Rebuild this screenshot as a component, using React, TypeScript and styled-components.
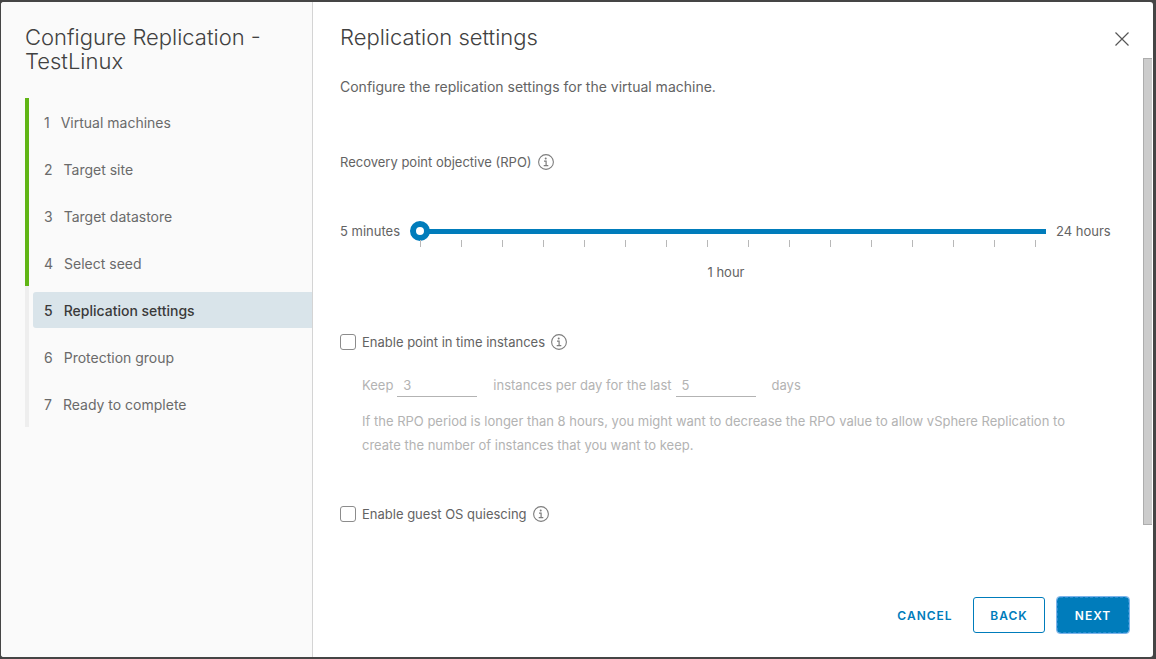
import React, { useState } from "react";
import styled, { createGlobalStyle, css } from "styled-components";

const GlobalStyle = createGlobalStyle`
  * { box-sizing: border-box; }
  body {
    margin: 0;
    background: #454545;
    color: #636363;
    font-family: Inter, "Liberation Sans", sans-serif;
    font-size: 13px;
    line-height: 24px;
  }
  button, input { font-family: inherit; }
`;

const Backdrop = styled.div`
  min-height: 100vh;
  display: flex;
  padding: 2px 3px 2px 1px;
  background: #454545;
`;

const Wizard = styled.div`
  flex: 1;
  display: flex;
  min-width: 0;
  border-radius: 3px;
  overflow: hidden;
  background: #ffffff;
`;

const Sidebar = styled.aside`
  flex: 0 0 312px;
  padding: 23px 0 24px 24px;
  background: #fafafa;
  border-right: 1px solid #d4d4d4;
`;

const SidebarTitle = styled.h1`
  margin: 0 24px 25px 0;
  font-size: 22px;
  font-weight: 300;
  line-height: 24px;
  color: #414141;
`;

const StepList = styled.ol`
  margin: 0;
  padding: 0;
  list-style: none;
`;

const StepItem = styled.li<{ $done: boolean }>`
  padding: 6px 0 5px 4px;
  border-left: 4px solid ${(p) => (p.$done ? "#60b515" : "#eeeeee")};
`;

const StepButton = styled.button<{ $active: boolean }>`
  display: flex;
  align-items: center;
  gap: 11px;
  width: 100%;
  height: 36px;
  padding: 0 11px;
  border: 0;
  border-radius: 3px 0 0 3px;
  background: ${(p) => (p.$active ? "#d9e4ea" : "transparent")};
  color: ${(p) => (p.$active ? "#3a3a3a" : "#6a6a6a")};
  font-size: 14px;
  font-weight: ${(p) => (p.$active ? 500 : 400)};
  text-align: left;
  cursor: pointer;
`;

const Main = styled.main`
  flex: 1;
  min-width: 0;
  display: flex;
  flex-direction: column;
`;

const Header = styled.header`
  display: flex;
  align-items: flex-start;
  justify-content: space-between;
  height: 56px;
  padding: 23px 23px 0 27px;
`;

const PageTitle = styled.h2`
  margin: 0;
  font-size: 22px;
  font-weight: 300;
  color: #414141;
`;

const CloseButton = styled.button`
  display: flex;
  padding: 6px 0;
  border: 0;
  background: none;
  color: #565656;
  cursor: pointer;
`;

const Body = styled.div`
  flex: 1;
  display: flex;
`;

const Content = styled.div`
  flex: 1;
  min-width: 0;
  padding: 17px 33px 0 27px;
`;

const ScrollTrack = styled.div`
  flex: 0 0 10px;
  padding-right: 1px;
`;

const ScrollThumb = styled.div`
  height: 90%;
  background: #cccccc;
  border: 1px solid #adadad;
  border-right: 0;
`;

const Intro = styled.p`
  margin: 0 0 51px;
  font-size: 14px;
`;

const FieldTitle = styled.div`
  display: flex;
  align-items: center;
  gap: 6px;
  margin-bottom: 47px;
`;

const SliderRow = styled.div`
  display: grid;
  grid-template-columns: 60px 1fr 54px;
  column-gap: 10px;
  margin-bottom: 46px;
  line-height: 20px;
  white-space: nowrap;
`;

const thumbStyle = css`
  width: 20px;
  height: 20px;
  border: 6px solid #007cbb;
  border-radius: 50%;
  background: #ffffff;
  box-sizing: border-box;
`;

const Slider = styled.input`
  display: block;
  appearance: none;
  width: 100%;
  height: 20px;
  margin: 0 0 -1px;
  background: linear-gradient(#007cbb, #007cbb) right 0 top 8px / calc(100% - 10px) 5px no-repeat;
  border-radius: 2px;
  cursor: pointer;
  &::-webkit-slider-thumb { appearance: none; ${thumbStyle} }
  &::-moz-range-thumb { ${thumbStyle} }
`;

const Ticks = styled.div`
  display: flex;
  justify-content: space-between;
  padding: 0 10px;
`;

const Tick = styled.span`
  width: 1px;
  height: 7px;
  background: #b8b8b8;
`;

const Scale = styled.div`
  display: grid;
  grid-template-columns: repeat(15, 1fr);
  padding: 13px 10px 0;
  line-height: 24px;
`;

const ScaleValue = styled.output`
  grid-column: 8;
  width: 0;
`;

const CheckRow = styled.div`
  display: flex;
  align-items: center;
  gap: 6px;
`;

const CheckLabel = styled.label`
  display: flex;
  align-items: center;
  gap: 6px;
  cursor: pointer;
`;

const Checkbox = styled.input`
  appearance: none;
  width: 16px;
  height: 16px;
  margin: 0;
  border: 1px solid #8c8c8c;
  border-radius: 3px;
  background: #ffffff;
  &:checked { background: #007cbb; border-color: #007cbb; }
`;

const Retention = styled.div<{ $enabled: boolean }>`
  padding: 19px 0 45px 22px;
  color: ${(p) => (p.$enabled ? "#636363" : "#b3b3b3")};
`;

const KeepRow = styled.div`
  display: flex;
  align-items: center;
  margin-bottom: 12px;
`;

const NumberInput = styled.input`
  width: 80px;
  height: 24px;
  margin: 0 16px 0 4px;
  padding: 0 6px;
  border: 0;
  border-bottom: 1px solid #b3b3b3;
  background: transparent;
  color: inherit;
  font-size: 13px;
`;

const Hint = styled.p`
  margin: 0;
  max-width: 740px;
`;

const Footer = styled.footer`
  display: flex;
  justify-content: flex-end;
  gap: 12px;
  padding: 20px 24px 24px;
`;

const Button = styled.button<{ $kind: "link" | "outline" | "primary" }>`
  height: 36px;
  min-width: 72px;
  padding: 0 7px;
  border: 1px solid ${(p) => (p.$kind === "link" ? "transparent" : "#007cbb")};
  border-radius: 3px;
  background: ${(p) => (p.$kind === "primary" ? "#007cbb" : "transparent")};
  color: ${(p) => (p.$kind === "primary" ? "#ffffff" : "#007cbb")};
  font-size: 12px;
  font-weight: 600;
  letter-spacing: 1px;
  text-transform: uppercase;
  cursor: pointer;
  ${(p) =>
    p.$kind === "primary" &&
    css`
      border: 1px dashed #2b8fd0;
      outline: 1px solid #7db4ea;
    `}
`;

const InfoIcon = () => (
  <svg width="16" height="16" viewBox="0 0 16 16" fill="none" stroke="#7d7d7d" role="img" aria-label="More information">
    <circle cx="8" cy="8" r="7.4" strokeWidth="1.1" />
    <circle cx="7.7" cy="4.6" r="1" fill="#7d7d7d" stroke="none" />
    <path d="M6 7.2H8.1V11.7M5.7 11.7H10.3" strokeWidth="1.2" />
  </svg>
);

const CloseIcon = () => (
  <svg width="16" height="16" viewBox="0 0 16 16" fill="none" stroke="currentColor" strokeWidth="1.2" aria-hidden="true">
    <path d="M1.5 1.5L14.5 14.5M14.5 1.5L1.5 14.5" />
  </svg>
);

const steps = [
  "Virtual machines",
  "Target site",
  "Target datastore",
  "Select seed",
  "Replication settings",
  "Protection group",
  "Ready to complete",
];
const current = 4;

export default function App() {
  const [rpo, setRpo] = useState(0);
  const [pointInTime, setPointInTime] = useState(false);

  return (
    <>
      <GlobalStyle />
      <Backdrop>
        <Wizard role="dialog" aria-labelledby="wizard-title">
          <Sidebar>
            <SidebarTitle id="wizard-title">Configure Replication - TestLinux</SidebarTitle>
            <StepList>
              {steps.map((name, i) => (
                <StepItem key={name} $done={i < current}>
                  <StepButton type="button" $active={i === current} aria-current={i === current ? "step" : undefined}>
                    <span>{i + 1}</span>
                    <span>{name}</span>
                  </StepButton>
                </StepItem>
              ))}
            </StepList>
          </Sidebar>
          <Main>
            <Header>
              <PageTitle>Replication settings</PageTitle>
              <CloseButton type="button" aria-label="Close">
                <CloseIcon />
              </CloseButton>
            </Header>
            <Body>
              <Content>
                <Intro>Configure the replication settings for the virtual machine.</Intro>
                <FieldTitle>
                  <label htmlFor="rpo">Recovery point objective (RPO)</label>
                  <InfoIcon />
                </FieldTitle>
                <SliderRow>
                  <span>5 minutes</span>
                  <div>
                    <Slider
                      id="rpo"
                      type="range"
                      min={0}
                      max={15}
                      value={rpo}
                      onChange={(e) => setRpo(Number(e.target.value))}
                    />
                    <Ticks>
                      {Array.from({ length: 16 }, (_, i) => (
                        <Tick key={i} />
                      ))}
                    </Ticks>
                    <Scale>
                      <ScaleValue htmlFor="rpo">1 hour</ScaleValue>
                    </Scale>
                  </div>
                  <span>24 hours</span>
                </SliderRow>
                <CheckRow>
                  <CheckLabel>
                    <Checkbox
                      type="checkbox"
                      checked={pointInTime}
                      onChange={(e) => setPointInTime(e.target.checked)}
                    />
                    Enable point in time instances
                  </CheckLabel>
                  <InfoIcon />
                </CheckRow>
                <Retention $enabled={pointInTime}>
                  <KeepRow>
                    <label htmlFor="per-day">Keep</label>
                    <NumberInput id="per-day" defaultValue="3" disabled={!pointInTime} />
                    <label htmlFor="days">instances per day for the last</label>
                    <NumberInput id="days" defaultValue="5" disabled={!pointInTime} />
                    <span>days</span>
                  </KeepRow>
                  <Hint>
                    If the RPO period is longer than 8 hours, you might want to decrease the RPO value to allow vSphere
                    Replication to create the number of instances that you want to keep.
                  </Hint>
                </Retention>
                <CheckRow>
                  <CheckLabel>
                    <Checkbox type="checkbox" />
                    Enable guest OS quiescing
                  </CheckLabel>
                  <InfoIcon />
                </CheckRow>
              </Content>
              <ScrollTrack>
                <ScrollThumb />
              </ScrollTrack>
            </Body>
            <Footer>
              <Button type="button" $kind="link">Cancel</Button>
              <Button type="button" $kind="outline">Back</Button>
              <Button type="button" $kind="primary">Next</Button>
            </Footer>
          </Main>
        </Wizard>
      </Backdrop>
    </>
  );
}
